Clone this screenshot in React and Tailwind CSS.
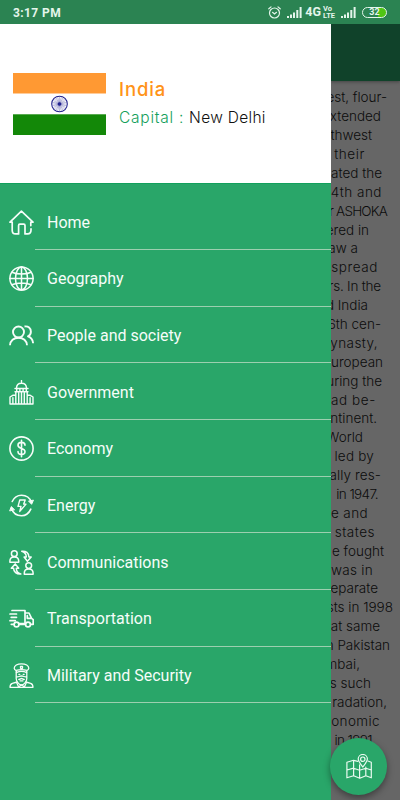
const ICON = {
  width: 25,
  height: 25,
  viewBox: "0 0 25 25",
  fill: "none",
  stroke: "#f6fdf9",
  strokeWidth: 1.7,
  strokeLinecap: "round",
  strokeLinejoin: "round",
};

function HomeIcon() {
  return (
    <svg {...ICON}>
      <path d="M22 18.8v1.200c0 2.500-1.300 3.900-3.400 3.900h-2.600v-8.500c0-.8-.4-1.200-1.200-1.200h-4c-.8 0-1.200.4-1.200 1.200v8.500H6.600c-2.200 0-3.400-1.400-3.400-3.700v-8H1L12.400 1.200 24 12.200h-2.200v3.400" />
    </svg>
  );
}

function GlobeIcon() {
  return (
    <svg {...ICON} strokeWidth={1.5}>
      <circle cx="12.5" cy="12.5" r="11.6" />
      <ellipse cx="12.5" cy="12.5" rx="6" ry="11.6" />
      <path d="M12.5.9v23.2M.9 12.5h23.2M2.8 6.2c5.5 2.400 13.900 2.400 19.400 0M2.800 18.800c5.500-2.400 13.900-2.400 19.400 0" />
    </svg>
  );
}

function PeopleIcon() {
  return (
    <svg {...ICON} strokeWidth={1.9} strokeLinecap="butt">
      <circle cx="9.5" cy="9" r="5.500" />
      <path d="M1 22.300c.2-4.600 3.800-7.600 8.500-7.600s8.300 3 8.500 7.600M15.500 3.500c3.700-.6 6.400 1.700 6.400 5.300 0 2.100-1 3.700-2.900 4.600 3.200 1.100 4.900 3.400 5.100 6.900" />
    </svg>
  );
}

function GovernmentIcon() {
  return (
    <svg {...ICON} strokeWidth={1.400}>
      <path d="M12.500.6v2.600M7.500 8.300c0-3 2.100-5 5-5s5 2 5 5M6 8.500h13M7.700 8.700v2.800M17.300 8.700v2.800M10.900 8.700v2.800M14.100 8.700v2.800M6 11.800h13M6.800 11.800v11.600M9.700 13v10.500M12.500 13v10.500M15.300 13v10.500M18.200 11.800v11.600M6.800 15.300h-3L1 17v7h23v-7l-2.800-1.700h-3M3.900 17.800v5.500M21.100 17.800v5.500" />
    </svg>
  );
}

function DollarIcon() {
  return (
    <svg {...ICON} strokeWidth={1.600}>
      <circle cx="12.500" cy="12.500" r="11.600" />
      <path d="M12.500 4.300v16.400M16 9.200c0-1.700-1.500-2.800-3.500-2.800S9 7.500 9 9.300c0 4.100 7 2.200 7 6.300 0 1.800-1.500 3-3.500 3S9 17.400 9 15.600" />
    </svg>
  );
}

function EnergyIcon() {
  return (
    <svg {...ICON} strokeWidth={1.600}>
      <path d="M3.200 8.500C5 4.600 8.400 2.200 12.500 2.200c4.700 0 8.500 2.900 9.900 7M21.800 16.200c-1.800 4-5.200 6.600-9.300 6.600-4.700 0-8.500-2.900-9.900-7" />
      <path d="M19.800 8.300l2.800 3 1.700-3.800zM.8 17.600l1.500-4 3 2.900z" fill="#f6fdf9" strokeWidth="1" />
      <path d="M10.800 7h5.400l-1.500 4.100h2.300l-6.200 7.300 1.200-5H9z" strokeWidth="1.400" />
    </svg>
  );
}

function CommunicationIcon() {
  return (
    <svg {...ICON} strokeWidth={1.500}>
      <circle cx="5.300" cy="3.700" r="2.900" />
      <path d="M.9 12.200V11c0-2.500 1.700-4.100 4.400-4.100s4.400 1.600 4.400 4.100v1.200z" />
      <circle cx="19.700" cy="15.600" r="2.900" />
      <path d="M15.300 24.200V23c0-2.500 1.700-4.100 4.400-4.100s4.400 1.600 4.400 4.100v1.200zM12.700 1.200c4.300-.5 7.200 1.800 7.200 5.800h2.300l-3.800 4.300-3.300-4.300h2.200c0-2.700-1.600-4.900-4.600-5.800zM11.800 24c-4.300.3-7.200-2-7.200-5.800H2.300l3.900-4.300 3.500 4.300H7.300c0 2.700 1.500 4.900 4.500 5.800z" />
    </svg>
  );
}

function TruckIcon() {
  return (
    <svg {...ICON} strokeWidth={1.700}>
      <path d="M3 4.500h13v13.200h-6M16 7h4l2.600 5.300 1.600 1.300v4.700h-2.300M22.600 12.300H18.300V9.700M1 8h6.500M2.200 11.300h5.300M1 14.700h5.300M2.300 18.300h2.500M10 18.300h6.300" />
      <circle cx="7.500" cy="18.500" r="2.400" />
      <circle cx="19" cy="18.500" r="2.400" />
    </svg>
  );
}

function OfficerIcon() {
  return (
    <svg {...ICON} strokeWidth={1.300}>
      <path d="M5.200 5.200C5.200 2.700 8.300.8 12.500.8s7.300 1.900 7.300 4.400c0 1-.9 1.800-2 2.400v2c-3.300-1.500-7.300-1.500-10.600 0v-2c-1.100-.6-2-1.400-2-2.400zM7.200 7.400c3.300-1 7.300-1 10.600 0M11.500 3.300h2v2h-2z" />
      <path d="M7.200 9.800v5.700c0 2.800 3 6.500 5.300 6.500s5.300-3.700 5.300-6.500V9.800M7.300 13.500c1.500 1 2.800-.5 5.200-.5s3.700 1.500 5.200.5M9.700 16.300c1.200.2 2-.8 2.800-.8s1.600 1 2.800.8M11 17.800h3M9.800 11.300h1M14.200 11.300h1" />
      <path d="M8 19l-4.600 1.300C1.800 20.800 1 22 1 24.300h23c0-2.300-.8-3.500-2.400-4L17 19M7.500 19.300l2 4.500 3-1.800 3 1.800 2-4.500" />
    </svg>
  );
}

function MapIcon() {
  return (
    <svg width="26" height="26" viewBox="0 0 26 26" fill="none" stroke="#e9faf0" strokeWidth="1.200" strokeLinejoin="round" strokeLinecap="round">
      <path d="M11.800 7.300L7.600 6.300.9 8.300v15.500l6.700-2 6.200 2.500 6-2.500 5.500 2V8.200l-3.400-1.200M7.600 6.300v15.500M13.600 10.800v13.400M19.800 13v8.800M1 16l6.600-1.800 6 2 6.200-2 5.500 1.800" />
      <path d="M16.800 13c-2.800-3.600-4.600-5.700-4.600-7.900a4.600 4.600 0 0 1 9.200 0c0 2.200-1.800 4.300-4.600 7.900z" />
      <circle cx="16.800" cy="5.200" r="2.200" />
    </svg>
  );
}

const MENU = [
  { label: "Home", Icon: HomeIcon },
  { label: "Geography", Icon: GlobeIcon },
  { label: "People and society", Icon: PeopleIcon },
  { label: "Government", Icon: GovernmentIcon },
  { label: "Economy", Icon: DollarIcon },
  { label: "Energy", Icon: EnergyIcon },
  { label: "Communications", Icon: CommunicationIcon },
  { label: "Transportation", Icon: TruckIcon },
  { label: "Military and Security", Icon: OfficerIcon },
];

// visible end of each article line, the free space to its right, its letter spacing
const ARTICLE = [
  ["est, flour-", 13, 0],
  ["xtended", 19, 0],
  ["thwest", 28, 0],
  ["their", 35, 0.6],
  ["ated the", 18, 0],
  ["4th and", 18, 0.5],
  ["r ASHOKA", 13, -0.8],
  ["ered in", 31, 0],
  ["aw a", 42, 0],
  ["spread", 22, 0.6],
  ["rs. In the", 19, -0.2],
  ["d India", 32, 0],
  ["6th cen-", 19, 0],
  ["ynasty,", 22, 0.4],
  ["uropean", 17, 0],
  ["uring the", 18, 0],
  ["ad be-", 24, 0.6],
  ["ntinent.", 23, 0],
  ["World", 37, 0],
  ["led by", 26, 0.2],
  ["ally res-", 19, 0.1],
  ["in 1947.", 22, -0.6],
  ["e and", 32, 0.4],
  ["states", 25, 0.5],
  ["e fought", 16, 0],
  ["was in", 27, 0.3],
  ["eparate", 22, 0],
  ["sts in 1998", 7, 0],
  ["at same", 20, 0],
  ["n Pakistan", 10, 0],
  ["mbai,", 40, 0],
  ["s such", 29, 0],
  ["radation,", 13, 0],
  ["onomic", 20, 0.4],
  ["in 1991", 28, -0.6],
];

function Signal() {
  return (
    <svg width="15" height="11" viewBox="0 0 15 11" fill="#e4f5eb">
      <rect x="0" y="9" width="2" height="2" />
      <rect x="3" y="7.500" width="2" height="3.500" />
      <rect x="6" y="5.500" width="2" height="5.500" />
      <rect x="9.300" y="3" width="2" height="8" />
      <rect x="12.600" y="0" width="2" height="11" />
    </svg>
  );
}

function StatusBar() {
  return (
    <div className="flex h-6 items-center bg-[#2b8352] pt-px pl-[13px] pr-[13px] text-[#e4f5eb]">
      <span className="text-[12px] font-bold leading-none tracking-[0.4px]">3:17 PM</span>
      <svg className="ml-auto" width="13" height="13" viewBox="0 0 13 13" fill="none" stroke="#e4f5eb" strokeWidth="1.200" strokeLinecap="round">
        <circle cx="6.500" cy="7" r="5" />
        <path d="M4.500 6.300l2 1.700 2-1.700M.8 2.800L3 .9M12.200 2.800L10 .9" />
      </svg>
      <div className="ml-[6px]"><Signal /></div>
      <span className="ml-[3px] text-[12.5px] font-bold leading-none">4G</span>
      <div className="ml-[2px] flex w-[13px] flex-col text-[7.5px] font-bold leading-[6.5px]">
        <span>Vo</span>
        <span>LTE</span>
      </div>
      <div className="ml-[5px]"><Signal /></div>
      <div className="ml-[6px] flex h-[11px] w-[25px] items-center justify-center rounded-full border border-[#e4f5eb] bg-linear-to-r from-transparent from-65% to-[#4fc414] to-65% text-[9px] font-bold leading-none">
        32
      </div>
    </div>
  );
}

function Flag() {
  return (
    <svg width="93" height="62" viewBox="0 0 93 62">
      <rect width="93" height="20.700" fill="#ff9933" />
      <rect y="20.700" width="93" height="20.600" fill="#fff" />
      <rect y="41.300" width="93" height="20.700" fill="#138808" />
      <g stroke="#22228f" fill="none">
        <circle cx="46.500" cy="31" r="7.800" strokeWidth="1.100" />
        {Array.from({ length: 12 }).map((_, i) => (
          <path key={i} d="M46.500 24v14" strokeWidth="0.400" opacity="0.700" transform={`rotate(${i * 15} 46.500 31)`} />
        ))}
      </g>
      <circle cx="46.500" cy="31" r="1.800" fill="#22228f" />
    </svg>
  );
}

function Drawer() {
  return (
    <div className="flex w-[331px] shrink-0 flex-col bg-[#29a669]">
      <div className="flex h-[159px] items-center bg-white pl-[13px]">
        <Flag />
        <div className="ml-[13px] flex flex-col pb-[2px] font-['Inter','Open_Sans',sans-serif]">
          <span className="text-[18.5px] font-medium leading-[30px] tracking-[0.9px] text-[#ff9318]">India</span>
          <div className="flex gap-[5px] text-[15.5px] font-light leading-[28px]">
            <span className="tracking-[0.75px] text-[#14a05c]">Capital :</span>
            <span className="tracking-[0.3px] text-[#111]">New Delhi</span>
          </div>
        </div>
      </div>
      <nav className="flex flex-col border-t border-[#12a05c] pt-[9.4px]">
        {MENU.map(({ label, Icon }) => (
          <div key={label} className="flex h-[56.65px] items-stretch pl-[9px]">
            <div className="flex w-[26px] items-center pt-px">
              <Icon />
            </div>
            <div className="flex flex-1 items-center border-b border-[#9ccfaf] pt-[3px] pl-3 text-[16px] text-[#f6fdf9]">
              {label}
            </div>
          </div>
        ))}
      </nav>
    </div>
  );
}

export default function App() {
  return (
    <div className="relative flex h-[800px] w-[400px] flex-col overflow-hidden bg-[#666] font-['Roboto',sans-serif]">
      <StatusBar />
      <div className="flex min-h-0 flex-1">
        <Drawer />
        <div className="flex min-w-0 flex-1 flex-col overflow-hidden">
          <div className="h-[57px] shrink-0 bg-[#10422a] shadow-[0_1px_3px_#444]" />
          <div className="flex flex-col pt-[7px] font-['Inter','Open_Sans',sans-serif] text-[13.5px] font-light text-[#0c0c0c]">
            {ARTICLE.map(([text, space, spacing], i) => (
              <div
                key={i}
                className="flex h-[18.9px] shrink-0 items-center justify-end whitespace-nowrap"
                style={{ paddingRight: space, letterSpacing: spacing }}
              >
                {text}
              </div>
            ))}
          </div>
        </div>
      </div>
      <button className="absolute bottom-[5px] left-[330px] flex size-[57px] items-center justify-center rounded-full bg-[#29a669] shadow-[0_3px_7px_rgba(0,0,0,0.4)]">
        <MapIcon />
      </button>
    </div>
  );
}
